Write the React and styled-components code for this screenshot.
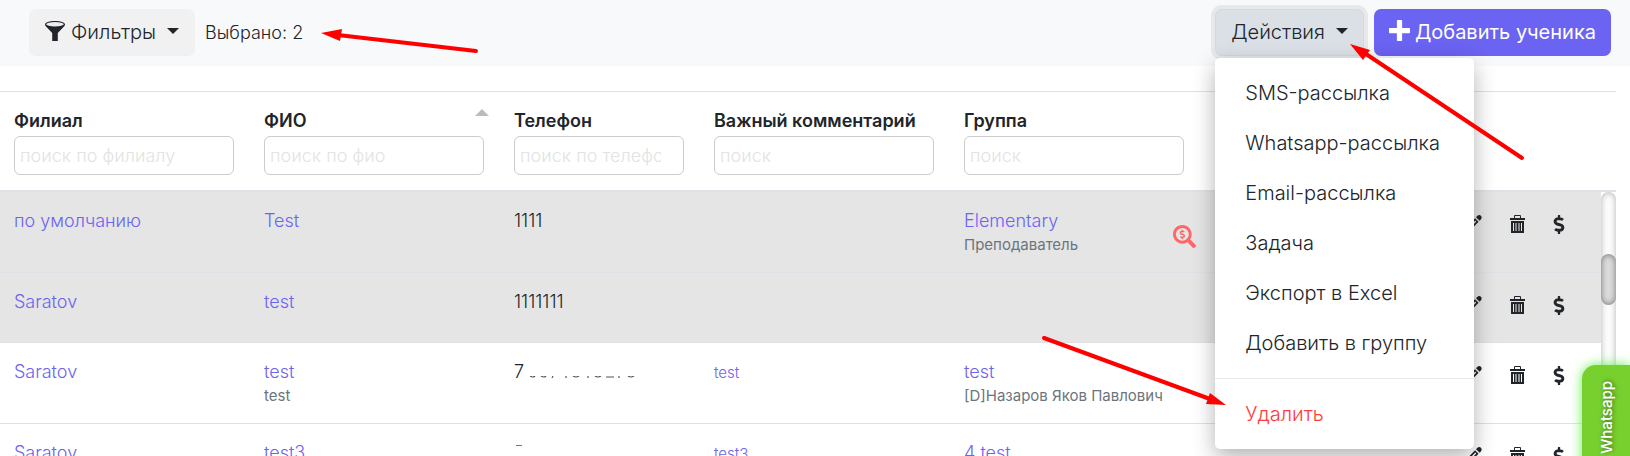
import styled, { createGlobalStyle } from "styled-components";
import { ImPlus } from "react-icons/im";
import { FaDollarSign, FaSearchDollar } from "react-icons/fa";

const columns = [
  { id: "branch", title: "Филиал", placeholder: "поиск по филиалу" },
  { id: "name", title: "ФИО", placeholder: "поиск по фио", sorted: true },
  { id: "phone", title: "Телефон", placeholder: "поиск по телефону" },
  { id: "comment", title: "Важный комментарий", placeholder: "поиск" },
  { id: "group", title: "Группа", placeholder: "поиск" },
];

const students = [
  {
    id: 1,
    branch: "по умолчанию",
    name: "Test",
    phone: "1111",
    group: "Elementary",
    teacher: "Преподаватель",
    debt: true,
    selected: true,
  },
  { id: 2, branch: "Saratov", name: "test", phone: "1111111", selected: true },
  {
    id: 3,
    branch: "Saratov",
    name: "test",
    note: "test",
    phone: "7",
    partlyErased: true,
    comment: "test",
    group: "test",
    teacher: "[D]Назаров Яков Павлович",
  },
  {
    id: 4,
    branch: "Saratov",
    name: "test3",
    erased: true,
    comment: "test3",
    group: "4 test",
  },
];

const menuItems = [
  "SMS-рассылка",
  "Whatsapp-рассылка",
  "Email-рассылка",
  "Задача",
  "Экспорт в Excel",
  "Добавить в группу",
];

export default function App() {
  const selectedCount = students.filter((student) => student.selected).length;

  return (
    <Page>
      <GlobalStyle />
      <Toolbar>
        <FilterButton type="button">
          <FunnelIcon />
          Фильтры
          <Caret />
        </FilterButton>
        <SelectedCount>Выбрано: {selectedCount}</SelectedCount>
        <Dropdown>
          <ActionsButton type="button" aria-expanded="true">
            Действия
            <Caret />
          </ActionsButton>
          <Menu>
            {menuItems.map((item) => (
              <MenuItem key={item} type="button">
                {item}
              </MenuItem>
            ))}
            <MenuDivider />
            <MenuItem type="button" $danger>
              Удалить
            </MenuItem>
          </Menu>
        </Dropdown>
        <AddButton type="button">
          <ImPlus size={21} />
          Добавить ученика
        </AddButton>
      </Toolbar>

      <TableArea>
        <Table>
          <Columns />
          <thead>
            <tr>
              {columns.map((column) => (
                <HeadCell key={column.id}>
                  <HeadLabel htmlFor={column.id}>
                    {column.title}
                    {column.sorted && <SortArrow />}
                  </HeadLabel>
                  <SearchInput
                    id={column.id}
                    type="text"
                    placeholder={column.placeholder}
                  />
                </HeadCell>
              ))}
              <HeadCell />
              <HeadCell />
            </tr>
          </thead>
        </Table>
        <TableBody>
          <Table>
            <Columns />
            <tbody>
              {students.map((student) => (
                <StudentRow key={student.id} student={student} />
              ))}
            </tbody>
          </Table>
          <ScrollTrack>
            <ScrollThumb />
          </ScrollTrack>
        </TableBody>
      </TableArea>

      <WhatsappTab href="#whatsapp">
        <WhatsappLabel>Whatsapp</WhatsappLabel>
      </WhatsappTab>
      <Arrows />
    </Page>
  );
}

function Columns() {
  return (
    <colgroup>
      <Col $width={250} />
      <Col $width={250} />
      <Col $width={200} />
      <Col $width={250} />
      <Col $width={250} />
      <Col />
      <Col $width={160} />
    </colgroup>
  );
}

function StudentRow({ student }) {
  return (
    <Row $selected={student.selected}>
      <Cell>
        <TextLink href="#branch">{student.branch}</TextLink>
      </Cell>
      <Cell>
        <TextLink href="#student">{student.name}</TextLink>
        {student.note && <Note>{student.note}</Note>}
      </Cell>
      <Cell>
        {student.phone}
        {student.partlyErased && <ErasedDigits />}
        {student.erased && <ErasedMark />}
      </Cell>
      <Cell>
        {student.comment && (
          <TextLink href="#comment" $small>
            {student.comment}
          </TextLink>
        )}
      </Cell>
      <Cell>
        {student.group && (
          <GroupInfo>
            <div>
              <TextLink href="#group">{student.group}</TextLink>
              {student.teacher && <Note>{student.teacher}</Note>}
            </div>
            {student.debt && <DebtIcon size={23} />}
          </GroupInfo>
        )}
      </Cell>
      <Cell />
      <Cell>
        <RowActions>
          <IconButton type="button" aria-label="Редактировать">
            <PencilIcon />
          </IconButton>
          <IconButton type="button" aria-label="Удалить">
            <TrashIcon />
          </IconButton>
          <IconButton type="button" aria-label="Оплата">
            <DollarIcon />
          </IconButton>
        </RowActions>
      </Cell>
    </Row>
  );
}

function FunnelIcon() {
  return (
    <svg width="20" height="20" viewBox="0 0 20 20" fill="currentColor">
      <path d="M0 3.500C0 1.400 4.500 0 10 0s10 1.400 10 3.500c0 .9-.4 1.400-1 2L12.800 12v8H7.200v-8L1 5.500C.4 4.900 0 4.400 0 3.500Z" />
      <ellipse cx="10" cy="3.200" rx="8.800" ry="2.200" fill="#e9eef2" />
    </svg>
  );
}

function PencilIcon() {
  return (
    <svg width="17" height="18" viewBox="0 0 17 18" fill="currentColor">
      <path d="M12.200 1c1.300-1.300 2.800-1.100 3.700-.2s1.100 2.400-.1 3.700l-1.200 1.200-3.600-3.500Z" />
      <path d="M10 3.200l3.600 3.500L4.500 16 0 17.500 1.200 12.500Zm.3 2.400L3.300 12.700l1 1 7-7.100Z" />
    </svg>
  );
}

function TrashIcon() {
  return (
    <svg width="15" height="18" viewBox="0 0 15 18" fill="currentColor">
      <path d="M4 3V1.200C4 .5 4.500 0 5.200 0h4.600C10.500 0 11 .5 11 1.200V3h4v2H0V3Zm1 0h5V1H5Z" />
      <path
        fillRule="evenodd"
        d="M1 6h13v12H1Zm2 2v8h1V8Zm2.500 0v8h1V8ZM8.500 8v8h1V8ZM11 8v8h1V8Z"
      />
    </svg>
  );
}

// what is left of the phone number under the eraser
function ErasedDigits() {
  return (
    <ErasedSvg width="106" height="2" viewBox="0 0 106 2" aria-hidden="true">
      <path
        d="M1 0q3 2 5 0M12 0q3 2 5 0M23 2l1-2M37 0v2M44 0q3 2 6 0M59 0v2M66 0q3 2 6 0M77 1h8M90 0v2M99 0q3 2 6 0"
        fill="none"
        stroke="#555"
        strokeWidth="1.200"
      />
    </ErasedSvg>
  );
}

function Arrows() {
  return (
    <ArrowLayer viewBox="0 0 1630 456" aria-hidden="true">
      <g stroke="#ff0000" strokeWidth="4" strokeLinecap="round">
        <path d="M476 51 L338 35" />
        <path d="M1522 158 L1366 54" />
        <path d="M1044 338 L1210 399" />
      </g>
      <g fill="#ff0000">
        <path d="M321 33 L342 29 L340 41 Z" />
        <path d="M1350 44 L1370 50 L1363 60 Z" />
        <path d="M1226 405 L1206 404 L1210 393 Z" />
      </g>
    </ArrowLayer>
  );
}

const GlobalStyle = createGlobalStyle`
  * {
    box-sizing: border-box;
  }
  body {
    margin: 0;
    background-color: #fff;
    color: #212529;
    font-family: Inter, "Liberation Sans", sans-serif;
    font-size: 18px;
    font-weight: 350;
    line-height: 27px;
  }
  button,
  input {
    font: inherit;
    color: inherit;
  }
  a {
    text-decoration: none;
  }
`;

const Page = styled.div`
  position: relative;
  height: 100vh;
  overflow: hidden;
`;

const Toolbar = styled.header`
  display: flex;
  align-items: center;
  gap: 10px;
  height: 66px;
  padding: 0 19px 2px 29px;
  background-color: #f8f9fb;
`;

const Button = styled.button`
  display: flex;
  align-items: center;
  gap: 6px;
  height: 47px;
  padding: 0 15px;
  border: 1px solid transparent;
  border-radius: 7px;
  font-size: 20px;
  line-height: 30px;
  white-space: nowrap;
  cursor: pointer;
  > svg {
    margin-bottom: 3px;
  }
`;

const FilterButton = styled(Button)`
  background-color: #f1f1f1;
`;

const ActionsButton = styled(Button)`
  border-color: #d3d9df;
  background-color: #dae0e5;
  box-shadow: 0 0 0 4px #e6e8ea;
`;

const AddButton = styled(Button)`
  gap: 5px;
  padding: 0 14px;
  background-color: #6b63f1;
  color: #fff;
  font-weight: 400;
`;

const Caret = styled.span`
  margin: 0 0 2px 5px;
  border: 6px solid transparent;
  border-top-color: currentColor;
  border-bottom: 0;
`;

const SelectedCount = styled.span`
  margin-right: auto;
  font-weight: 300;
`;

const Dropdown = styled.div`
  position: relative;
`;

const Menu = styled.div`
  position: absolute;
  z-index: 2;
  top: 49px;
  left: 0;
  min-width: 259px;
  padding: 10px 0;
  border-radius: 5px;
  background-color: #fff;
  box-shadow: 0 8px 22px rgba(0, 0, 0, 0.3);
`;

const MenuItem = styled.button`
  display: block;
  width: 100%;
  padding: 10px 30px;
  border: none;
  background: none;
  color: ${(props) => (props.$danger ? "#ff3b3b" : "#212529")};
  font-size: 20px;
  line-height: 30px;
  text-align: left;
  white-space: nowrap;
  cursor: pointer;
`;

const MenuDivider = styled.hr`
  height: 1px;
  margin: 10px 0;
  border: none;
  background-color: #e9ecef;
`;

const TableArea = styled.main`
  margin: 25px 14px 0 0;
  border-top: 1px solid #dee2e6;
`;

const Table = styled.table`
  flex: 1;
  width: 100%;
  table-layout: fixed;
  border-collapse: separate;
  border-spacing: 0;
`;

const Col = styled.col`
  width: ${(props) => (props.$width ? `${props.$width}px` : "auto")};
`;

const HeadCell = styled.th`
  padding: 15px 16px 15px 14px;
  border-bottom: 2px solid #dee2e6;
  text-align: left;
  vertical-align: top;
`;

const HeadLabel = styled.label`
  display: flex;
  justify-content: space-between;
  margin-bottom: 2px;
  font-weight: 600;
  white-space: nowrap;
`;

const SortArrow = styled.span`
  height: 7px;
  margin: 2px -5px 0 0;
  border: 7px solid transparent;
  border-top: 0;
  border-bottom-color: #bbb;
`;

const SearchInput = styled.input`
  display: block;
  width: 100%;
  height: 39px;
  padding: 0 22px 0 5px;
  border: 1px solid #ccc;
  border-radius: 6px;
  background-color: #fff;
  font-weight: 350;
  &::placeholder {
    color: #e3e3e3;
    opacity: 1;
  }
`;

const TableBody = styled.div`
  display: flex;
  height: 290px;
  overflow: hidden;
`;

const Row = styled.tr`
  height: 70px;
  background-color: ${(props) => (props.$selected ? "#e5e5e5" : "#fff")};
`;

const Cell = styled.td`
  padding: 15px 16px 15px 14px;
  border-bottom: 1px solid #dee2e6;
  vertical-align: top;
`;

const TextLink = styled.a`
  color: #6b63f1;
  font-size: ${(props) => (props.$small ? "15px" : "18px")};
`;

const Note = styled.div`
  padding-bottom: 2px;
  color: #6c757d;
  font-size: 15px;
  font-weight: 400;
  line-height: 21px;
  white-space: nowrap;
`;

const ErasedSvg = styled.svg`
  margin-left: 5px;
`;

const ErasedMark = styled.span`
  display: block;
  width: 6px;
  height: 1px;
  margin: 6px 0 0 2px;
  background-color: #777;
`;

const GroupInfo = styled.div`
  display: flex;
  align-items: center;
  justify-content: space-between;
  margin-right: -12px;
`;

const DebtIcon = styled(FaSearchDollar)`
  margin-top: 8px;
  color: #ff6666;
`;

const DollarIcon = styled(FaDollarSign)`
  width: 12px;
  height: 19px;
`;

const RowActions = styled.div`
  display: flex;
  justify-content: flex-end;
  gap: 28px;
  padding: 8px 20px 0 0;
`;

const IconButton = styled.button`
  display: flex;
  padding: 0;
  border: none;
  background: none;
  cursor: pointer;
`;

const ScrollTrack = styled.div`
  flex: none;
  width: 15px;
  padding-top: 62px;
  border-radius: 8px;
  background-color: #fcfcfc;
  box-shadow: inset 0 0 6px rgba(0, 0, 0, 0.3);
`;

const ScrollThumb = styled.div`
  height: 51px;
  border-radius: 8px;
  background-color: #dcdcdc;
  box-shadow: inset 0 0 6px rgba(0, 0, 0, 0.5);
`;

const WhatsappTab = styled.a`
  position: absolute;
  z-index: 1;
  top: 365px;
  right: 0;
  display: flex;
  align-items: flex-start;
  justify-content: center;
  width: 48px;
  height: 130px;
  padding-top: 16px;
  border-radius: 14px 0 0 14px;
  background-color: #78d02e;
  box-shadow: 0 0 12px #66ee55;
  color: #fff;
  font-size: 15px;
  font-weight: 500;
  text-shadow: 1px 1px 4px rgba(0, 0, 0, 0.5);
`;

const WhatsappLabel = styled.span`
  writing-mode: vertical-rl;
  transform: rotate(180deg);
`;

const ArrowLayer = styled.svg`
  position: absolute;
  z-index: 3;
  top: 0;
  left: 0;
  width: 100%;
  pointer-events: none;
`;
